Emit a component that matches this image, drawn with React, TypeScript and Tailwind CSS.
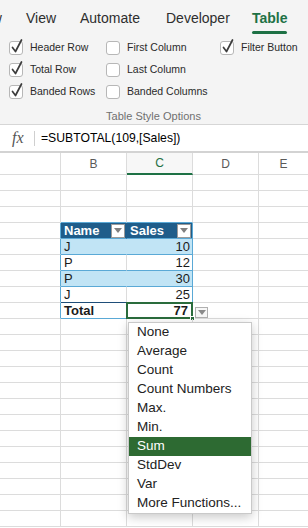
import type { ReactNode } from 'react'

const GRID = 'border-[#dcdcdc]'
const BLUE = '#5aa9d6'

function Check({ on }: { on?: boolean }) {
  return (
    <span className="relative flex h-[14px] w-[14px] shrink-0 rounded-[3px] border border-[#b7b7b7] bg-white">
      {on && (
        <svg width="14" height="16" viewBox="0 0 14 16" className="absolute left-[0px] top-[-4px]">
          <path d="M2.5 9.5 L5.5 13.5 L11.5 2" stroke="#3d3d3d" strokeWidth="1.7" fill="none" strokeLinecap="round" strokeLinejoin="round" />
        </svg>
      )}
    </span>
  )
}

function Opt({ on, label }: { on?: boolean; label: string }) {
  return (
    <div className="flex h-[22px] items-center gap-[7px]">
      <Check on={on} />
      <span className="text-[10.5px] text-[#2a2a2a]">{label}</span>
    </div>
  )
}

function FilterBtn() {
  return (
    <span className="flex h-[14px] w-[14px] items-center justify-center border border-[#9a9a9a] bg-white">
      <svg width="8" height="5" viewBox="0 0 8 5">
        <path d="M0 0 H8 L4 5 Z" fill="#808080" />
      </svg>
    </span>
  )
}

type Kind = 'empty' | 'head' | 'band' | 'plain' | 'lastplain' | 'total'

function Row({ kind = 'empty', b, c, aboveTable }: { kind?: Kind; b?: ReactNode; c?: ReactNode; aboveTable?: boolean }) {
  const inTable = kind !== 'empty'
  const rowBorder = aboveTable ? 'border-b-[#5aa9d6]' : ''
  let bg = ''
  if (kind === 'head') bg = 'bg-[#1f5d8a] text-white font-bold'
  if (kind === 'band') bg = 'bg-[#c1e4f5]'
  const bBottom =
    kind === 'lastplain' ? 'border-b-[#1f4e79]' : inTable || aboveTable ? 'border-b-[#5aa9d6]' : ''
  const bRight =
    kind === 'head' ? 'border-r-[#1f5d8a]' : kind === 'band' ? 'border-r-[#c1e4f5]' : ''
  return (
    <div className={`grid h-[16px] grid-cols-[61px_66px_66px_66px_1fr] text-[13px] leading-none`}>
      <div className={`border-b border-r ${GRID} ${inTable ? 'border-r-[#5aa9d6]' : ''}`} />
      <div className={`flex items-center justify-between border-b border-r ${GRID} ${bBottom} ${bRight} ${bg} pl-[3px] ${rowBorder}`}>
        <span className={kind === 'total' ? 'font-bold' : ''}>{b}</span>
        {kind === 'head' && (
          <span className="mr-[1px]">
            <FilterBtn />
          </span>
        )}
      </div>
      <div className={`relative flex items-center justify-between border-b border-r ${GRID} ${bBottom} ${inTable ? 'border-r-[#5aa9d6]' : ''} ${bg} pl-[3px] pr-[2px]`}>
        {kind === 'head' ? (
          <>
            <span>{c}</span>
            <span className="mr-[-1px]">
              <FilterBtn />
            </span>
          </>
        ) : (
          <span className={`ml-auto ${kind === 'total' ? 'mr-[2px] font-bold' : ''}`}>{c}</span>
        )}
        {kind === 'total' && (
          <>
            <span className="pointer-events-none absolute left-[-1px] top-[-1px] h-[17px] w-[67px] border-2 border-[#2a6c3c]" />
            <span className="absolute bottom-[-3px] right-[-3px] h-[5px] w-[5px] border border-white bg-[#2a6c3c]" />
            <span className="absolute left-[68px] top-[4px] flex h-[11px] w-[13px] items-center justify-center border border-[#b0b0b0] bg-[#f7f7f7]">
              <svg width="8" height="5" viewBox="0 0 8 5">
                <path d="M0 0 H8 L4 5 Z" fill="#8a8a8a" />
              </svg>
            </span>
          </>
        )}
      </div>
      <div className={`border-b border-r ${GRID}`} />
      <div className={`border-b ${GRID}`} />
    </div>
  )
}

const MENU = ['None', 'Average', 'Count', 'Count Numbers', 'Max.', 'Min.', 'Sum', 'StdDev', 'Var', 'More Functions...']

export default function App() {
  return (
    <div
      className="relative h-[528px] w-[308px] overflow-hidden bg-white text-[#1a1a1a]"
      style={{ fontFamily: '"Liberation Sans", Arial, sans-serif' }}
    >
      {/* Ribbon */}
      <div className="h-[125px] border-b border-[#d6d6d6] bg-[#f4f4f4]">
        <div className="flex h-[31px] items-start pt-[8px] text-[14px] text-[#2e2e2e]">
          <span className="-ml-[44px] w-[70px] shrink-0">Review</span>
          <span className="w-[54px] shrink-0">View</span>
          <span className="w-[86px] shrink-0">Automate</span>
          <span className="w-[86px] shrink-0">Developer</span>
          <span className="flex flex-col items-start">
            <span className="font-bold text-[#1e7145]">Table</span>
            <span className="mt-[2px] h-[3px] w-[35px] rounded-full bg-[#1e7145]" />
          </span>
        </div>
        <div className="grid grid-cols-[97px_114px_1fr] pl-[9px] pt-[6px]">
          <div>
            <Opt on label="Header Row" />
            <Opt on label="Total Row" />
            <Opt on label="Banded Rows" />
          </div>
          <div>
            <Opt label="First Column" />
            <Opt label="Last Column" />
            <Opt label="Banded Columns" />
          </div>
          <div>
            <Opt on label="Filter Button" />
          </div>
        </div>
        <div className="mt-[5px] text-center text-[11px] text-[#707070]">
          <span className="ml-[-1px]">Table Style Options</span>
        </div>
      </div>

      {/* Formula bar */}
      <div className="flex h-[28px] items-center border-b-2 border-[#d3d3d3]">
        <span className="ml-[12px] w-[22px] text-[16px] italic text-[#555]" style={{ fontFamily: '"Liberation Serif", serif' }}>
          fx
        </span>
        <span className="h-[15px] w-px bg-[#cfcfcf]" />
        <span className="ml-[6px] text-[12.2px] text-black">=SUBTOTAL(109,[Sales])</span>
      </div>

      {/* Column headers */}
      <div className="grid h-[22px] grid-cols-[61px_66px_66px_66px_1fr] text-[12px] text-[#5a5a5a]">
        <div className={`border-b border-r ${GRID}`} />
        <div className={`flex items-center justify-center border-b border-r ${GRID}`}>B</div>
        <div className={`flex items-center justify-center border-b-2 border-r border-b-[#1e7145] ${GRID} bg-[#f7f7f7] text-[#1e7145]`}>C</div>
        <div className={`flex items-center justify-center border-b border-r ${GRID}`}>D</div>
        <div className={`flex items-center justify-center border-b ${GRID}`}>E</div>
      </div>

      {/* Sheet rows */}
      <div>
        <Row />
        <Row />
        <Row aboveTable />
        <Row kind="head" b="Name" c="Sales" />
        <Row kind="band" b="J" c="10" />
        <Row kind="plain" b="P" c="12" />
        <Row kind="band" b="P" c="30" />
        <Row kind="lastplain" b="J" c="25" />
        <Row kind="total" b="Total" c="77" />
        {Array.from({ length: 13 }).map((_, i) => (
          <Row key={i} />
        ))}
      </div>

      {/* Total function menu */}
      <div className="absolute left-[128px] top-[322px] w-[124px] border border-[#c9c9c9] bg-white shadow-[0_3px_10px_rgba(0,0,0,0.22)]">
        {MENU.map((m) => (
          <div
            key={m}
            className={`flex h-[19px] items-center pl-[8px] text-[13.5px] ${m === 'Sum' ? 'bg-[#2d6a32] text-white' : 'text-[#222]'}`}
          >
            {m}
          </div>
        ))}
      </div>
    </div>
  )
}
